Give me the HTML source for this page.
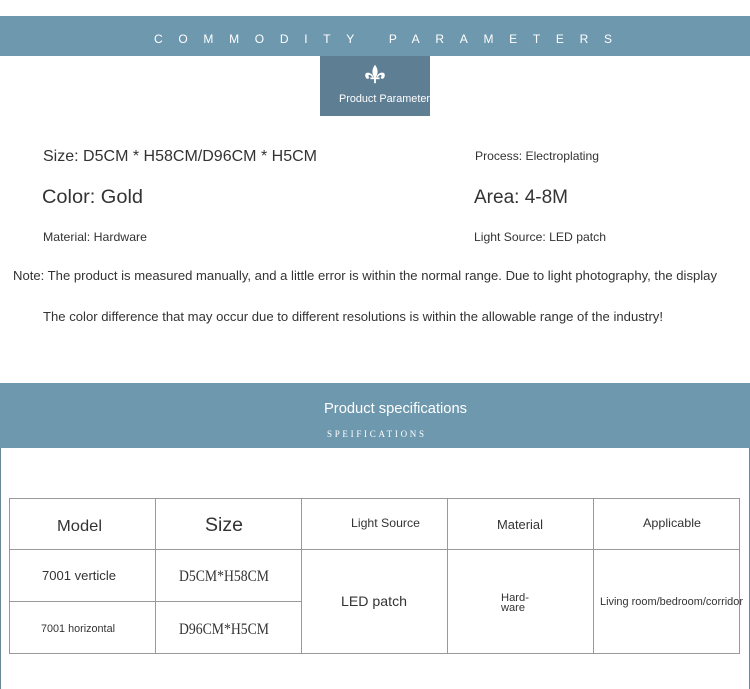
<!DOCTYPE html>
<html><head><meta charset="utf-8"><style>
html,body{margin:0;padding:0;background:#fff;width:750px;height:689px;overflow:hidden}
svg{display:block}
text{font-family:"Liberation Sans",sans-serif;fill:#333}
.s{font-family:"Liberation Serif",serif}
</style></head><body>
<svg width="750" height="689" viewBox="0 0 750 689" xmlns="http://www.w3.org/2000/svg">
<rect x="0" y="16" width="750" height="40" fill="#6e98ae"/>
<text x="154" y="43" font-size="12" fill="#fff" style="fill:#fff" textLength="458" lengthAdjust="spacing">COMMODITY  PARAMETERS</text>
<rect x="320" y="56" width="110" height="60" fill="#5e7e94"/>
<g fill="#fff" transform="translate(375,74) scale(1.15)">
<path d="M0,-8 C3,-4 3,0 0,4 C-3,0 -3,-4 0,-8Z"/>
<path d="M-2,1 C-6,-3 -10,-1 -8,3 C-7,5 -5,4 -5,3 C-6,2 -6,0 -4,1 L-1,4Z"/>
<path d="M2,1 C6,-3 10,-1 8,3 C7,5 5,4 5,3 C6,2 6,0 4,1 L1,4Z"/>
<rect x="-4" y="3" width="8" height="1.5"/>
<rect x="-0.8" y="4" width="1.6" height="4"/>
</g>
<text x="339" y="102" font-size="11" style="fill:#fff" textLength="91" lengthAdjust="spacingAndGlyphs">Product Parameter</text>

<text x="43" y="161" font-size="16" textLength="274" lengthAdjust="spacingAndGlyphs">Size: D5CM * H58CM/D96CM * H5CM</text>
<text x="475" y="160" font-size="12" textLength="124" lengthAdjust="spacingAndGlyphs">Process: Electroplating</text>
<text x="42" y="203" font-size="19" textLength="101" lengthAdjust="spacingAndGlyphs">Color: Gold</text>
<text x="474" y="203" font-size="19" textLength="94" lengthAdjust="spacingAndGlyphs">Area: 4-8M</text>
<text x="43" y="241" font-size="12" textLength="104" lengthAdjust="spacingAndGlyphs">Material: Hardware</text>
<text x="474" y="241" font-size="12" textLength="132" lengthAdjust="spacingAndGlyphs">Light Source: LED patch</text>
<text x="13" y="280" font-size="13" textLength="704" lengthAdjust="spacingAndGlyphs">Note: The product is measured manually, and a little error is within the normal range. Due to light photography, the display</text>
<text x="43" y="321" font-size="13" textLength="620" lengthAdjust="spacingAndGlyphs">The color difference that may occur due to different resolutions is within the allowable range of the industry!</text>

<rect x="0" y="383" width="750" height="65" fill="#6e98ae"/>
<text x="324" y="413" font-size="15" style="fill:#fff" textLength="143" lengthAdjust="spacingAndGlyphs">Product specifications</text>
<text class="s" x="327" y="437" font-size="9" style="fill:#fff" textLength="97" lengthAdjust="spacing">SPEIFICATIONS</text>
<rect x="0" y="448" width="1" height="241" fill="#6a8797"/>
<rect x="749" y="448" width="1" height="241" fill="#6a8797"/>

<g stroke="#999" stroke-width="1" fill="none">
<rect x="9.5" y="498.5" width="730" height="155"/>
<line x1="155.5" y1="498" x2="155.5" y2="654"/>
<line x1="301.5" y1="498" x2="301.5" y2="654"/>
<line x1="447.5" y1="498" x2="447.5" y2="654"/>
<line x1="593.5" y1="498" x2="593.5" y2="654"/>
<line x1="9" y1="549.5" x2="740" y2="549.5"/>
<line x1="9" y1="601.5" x2="301" y2="601.5"/>
</g>
<text x="57" y="531" font-size="16" textLength="45" lengthAdjust="spacingAndGlyphs">Model</text>
<text x="205" y="531" font-size="19" textLength="38" lengthAdjust="spacingAndGlyphs">Size</text>
<text x="351" y="527" font-size="12" textLength="69" lengthAdjust="spacingAndGlyphs">Light Source</text>
<text x="497" y="529" font-size="13" textLength="46" lengthAdjust="spacingAndGlyphs">Material</text>
<text x="643" y="527" font-size="12" textLength="58" lengthAdjust="spacingAndGlyphs">Applicable</text>
<text x="42" y="580" font-size="13" textLength="74" lengthAdjust="spacingAndGlyphs">7001 verticle</text>
<text class="s" x="179" y="581" font-size="16" textLength="90" lengthAdjust="spacingAndGlyphs">D5CM*H58CM</text>
<text x="41" y="632" font-size="11" textLength="74" lengthAdjust="spacingAndGlyphs">7001 horizontal</text>
<text class="s" x="179" y="634" font-size="16" textLength="90" lengthAdjust="spacingAndGlyphs">D96CM*H5CM</text>
<text x="341" y="606" font-size="14" textLength="66" lengthAdjust="spacingAndGlyphs">LED patch</text>
<text x="501" y="601" font-size="11" textLength="28" lengthAdjust="spacingAndGlyphs">Hard-</text>
<text x="501" y="611" font-size="11" textLength="24" lengthAdjust="spacingAndGlyphs">ware</text>
<text x="600" y="605" font-size="11" textLength="143" lengthAdjust="spacingAndGlyphs">Living room/bedroom/corridor</text>
</svg>
</body></html>
